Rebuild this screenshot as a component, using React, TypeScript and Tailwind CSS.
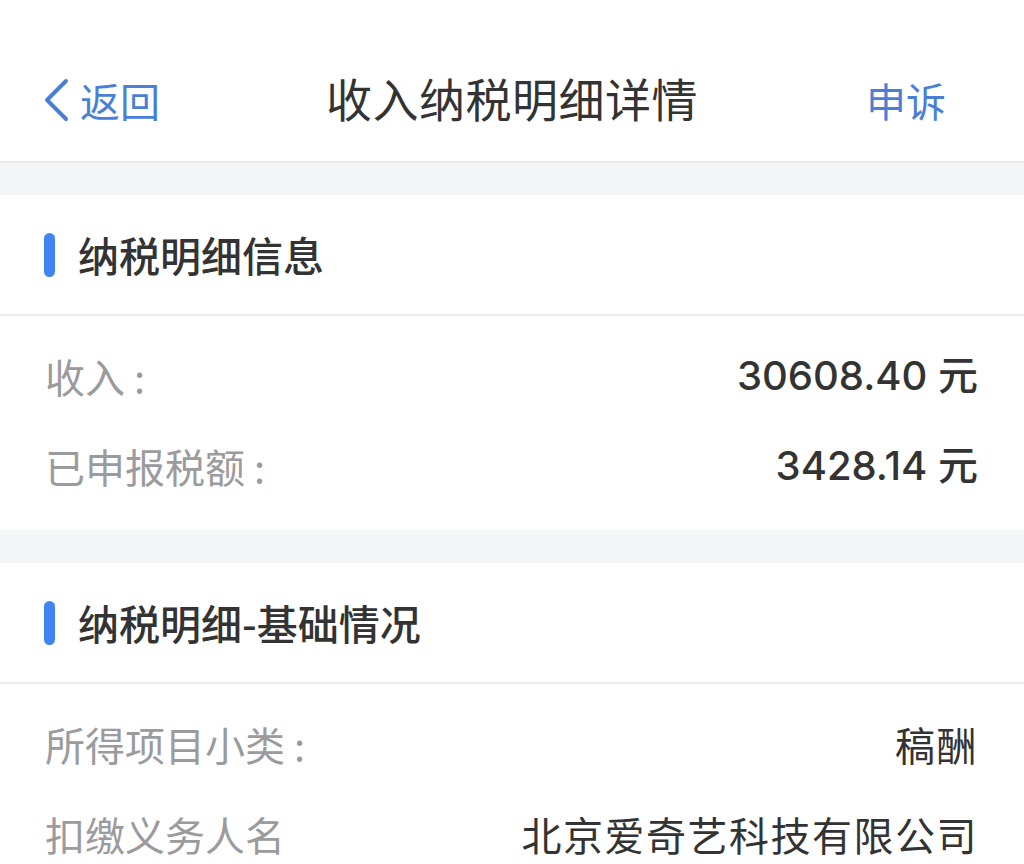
import React from "react";

const font = { fontFamily: '"Noto Sans CJK SC", "Noto Sans", sans-serif' };
const numFont = { fontFamily: 'Inter, "Noto Sans CJK SC", sans-serif' };

function SectionHeader({ title }: { title: string }) {
  return (
    <div className="flex h-[121px] items-center border-b-2 border-[#ececee] pl-[44px]">
      <div className="h-[44px] w-[11px] rounded-full bg-[#3f84f0]" />
      <div className="ml-[23px] text-[41px] font-medium leading-none text-[#333333]">{title}</div>
    </div>
  );
}

function Row({ label, colon, value, num }: { label: string; colon?: boolean; value: string; num?: boolean }) {
  return (
    <div className="flex h-[90px] items-center justify-between pl-[45px] pr-[46px]">
      <div className="text-[40px] leading-none text-[#9b9b9d]">
        {label}
        {colon && <span className="ml-[9px]">:</span>}
      </div>
      <div
        className={`leading-none text-[#333333] ${num ? "text-[40px] font-medium" : "text-[40px] tracking-[1.5px]"}`}
        style={num ? numFont : undefined}
      >
        {value}
      </div>
    </div>
  );
}

export default function App() {
  return (
    <div className="h-[864px] w-[1024px] overflow-hidden bg-[#f4f5f7]" style={font}>
      <div className="relative flex h-[163px] items-center justify-between border-b-2 border-[#e8e8ea] bg-white pt-[38px]">
        <div className="flex items-center pl-[42px] text-[#4a7fd6]">
          <svg width="28" height="44" viewBox="0 0 28 44" fill="none">
            <path d="M24 3 L5 22 L24 41" stroke="#4a7fd6" strokeWidth="4" strokeLinecap="round" strokeLinejoin="round" />
          </svg>
          <span className="ml-[10px] text-[40px] leading-none">返回</span>
        </div>
        <div className="absolute left-0 right-0 top-[36px] flex h-[121px] items-center justify-center text-[46px] leading-none tracking-[0.5px] text-[#333333]">
          收入纳税明细详情
        </div>
        <div className="pr-[78px] text-[40px] leading-none text-[#4a7fd6]">申诉</div>
      </div>
      <div className="h-[32px]" />
      <div className="bg-white pb-[19px]">
        <SectionHeader title="纳税明细信息" />
        <div className="pt-[15px]">
          <Row label="收入" colon value="30608.40 元" num />
          <Row label="已申报税额" colon value="3428.14 元" num />
        </div>
      </div>
      <div className="h-[33px]" />
      <div className="bg-white">
        <SectionHeader title="纳税明细-基础情况" />
        <div className="pt-[15px]">
          <Row label="所得项目小类" colon value="稿酬" />
          <Row label="扣缴义务人名" value="北京爱奇艺科技有限公司" />
        </div>
      </div>
    </div>
  );
}
